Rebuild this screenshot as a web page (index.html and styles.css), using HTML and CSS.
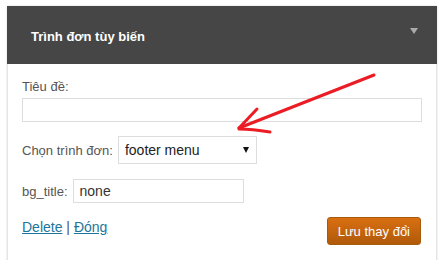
FILE: index.html
```html
<!DOCTYPE html>
<html lang="vi">
<head>
  <meta charset="UTF-8">
  <title>Trình đơn tùy biến</title>
  <link rel="stylesheet" href="styles.css">
</head>
<body>

  <div class="widget">
    <!-- Widget header -->
    <div class="widget-top">
      <h3>Trình đơn tùy biến</h3>
      <span class="widget-toggle"></span>
    </div>

    <!-- Widget form -->
    <div class="widget-inside">
      <label class="field-label" for="title">Tiêu đề:</label>
      <input type="text" id="title" class="wide-input">

      <div class="field-row">
        <label for="menu">Chọn trình đơn:</label>
        <select id="menu" class="menu-select">
          <option>footer menu</option>
        </select>
      </div>

      <div class="field-row row-bg">
        <label for="bg-title">bg_title:</label>
        <input type="text" id="bg-title" class="short-input" value="none">
      </div>

      <div class="widget-controls">
        <div class="links">
          <a href="#">Delete</a> | <a href="#">Đóng</a>
        </div>
        <button class="save-btn">Lưu thay đổi</button>
      </div>
    </div>

    <!-- Red annotation arrow -->
    <svg class="annotation" width="446" height="260" viewBox="0 0 446 260">
      <g fill="none" stroke="#ec1c24" stroke-width="3" stroke-linecap="round" stroke-linejoin="round">
        <path d="M374 75 L239 128"/>
        <path d="M257 109 L239 128"/>
        <path d="M239 129 Q252 129 270 132"/>
      </g>
    </svg>
  </div>

</body>
</html>
```

FILE: styles.css
```css
/* Global Styles */
body {
  margin: 0;
  padding: 0;
  background-color: #ffffff;
  font-family: "Liberation Sans", Arial, sans-serif;
  font-size: 13px;
  color: #555;
}

/* Widget box */
.widget {
  width: 430px;
  margin: 6px 0 0 7px;
  box-shadow: 0 0 2px rgba(0, 0, 0, 0.15);
}

.widget-top {
  height: 58px;
  background-color: #464646;
  display: flex;
  align-items: center;
  justify-content: space-between;
  padding: 0 19px 0 24px;
}

.widget-top h3 {
  margin: 0;
  font-size: 13px;
  font-weight: bold;
  color: #ffffff;
  padding-top: 2px;
}

.widget-toggle {
  width: 0;
  height: 0;
  border-left: 4px solid transparent;
  border-right: 4px solid transparent;
  border-top: 6px solid #aaaaaa;
  margin-bottom: 8px;
}

/* Form area */
.widget-inside {
  border: 1px solid #e5e5e5;
  border-top: none;
  padding: 15px 15px 20px 14px;
}

.field-label {
  display: block;
  line-height: 16px;
  margin-bottom: 3px;
}

.wide-input {
  display: block;
  box-sizing: border-box;
  width: 400px;
  height: 24px;
  margin: 0;
  border: 1px solid #dddddd;
  padding: 2px 6px;
  font-family: inherit;
  font-size: 14px;
  color: #333;
}

.field-row {
  display: flex;
  align-items: center;
  margin-top: 14px;
  gap: 5px;
}

.row-bg {
  margin-top: 15px;
}

.menu-select {
  -webkit-appearance: none;
  appearance: none;
  box-sizing: border-box;
  width: 139px;
  height: 28px;
  margin: 0;
  padding: 0 20px 0 6px;
  border: 1px solid #dddddd;
  border-radius: 0;
  background-color: #ffffff;
  background-image: url("data:image/svg+xml;utf8,<svg xmlns='http://www.w3.org/2000/svg' width='6' height='6'><path d='M0 0 L6 0 L3 6 Z' fill='%23111'/></svg>");
  background-repeat: no-repeat;
  background-position: right 7px center;
  font-family: inherit;
  font-size: 14px;
  color: #222;
}

.short-input {
  box-sizing: border-box;
  width: 171px;
  height: 24px;
  margin: 0;
  border: 1px solid #dddddd;
  padding: 2px 6px;
  font-family: inherit;
  font-size: 14px;
  color: #333;
}

/* Bottom controls */
.widget-controls {
  display: flex;
  justify-content: space-between;
  align-items: flex-start;
  margin-top: 14px;
}

.links {
  font-size: 14px;
  line-height: 18px;
  color: #555;
  padding-top: 1px;
}

.links a {
  color: #21759b;
}

.save-btn {
  box-sizing: border-box;
  height: 28px;
  padding: 0 10px;
  border: 1px solid #a65a0c;
  border-radius: 3px;
  background: linear-gradient(to bottom, #d96f12, #b05a0a);
  color: #ffffff;
  font-family: inherit;
  font-size: 13px;
  cursor: pointer;
}

/* Annotation overlay */
.annotation {
  position: absolute;
  top: 0;
  left: 0;
  pointer-events: none;
}
```
